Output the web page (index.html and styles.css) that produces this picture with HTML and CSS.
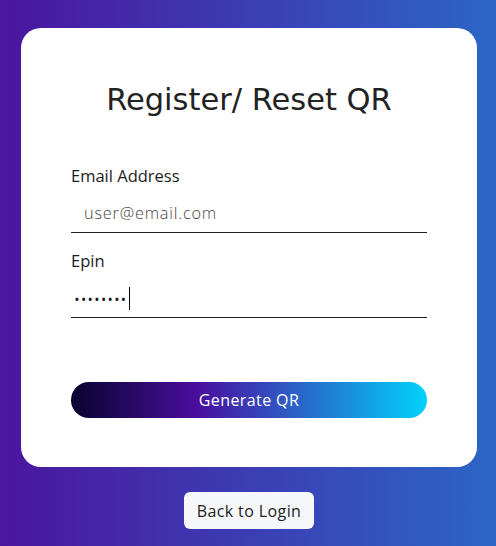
FILE: index.html
```html
<!DOCTYPE html>
<html>
<head>
<meta charset="utf-8">
<link rel="stylesheet" href="styles.css">
</head>
<body>
<div class="page">
  <div class="card">
    <h1 class="title">Register/ Reset QR</h1>
    <form class="form">
      <label class="field">
        <span class="label">Email Address</span>
        <span class="input">user@email.com</span>
      </label>
      <label class="field">
        <span class="label">Epin</span>
        <span class="input pw"><span class="dots">••••••••</span><span class="caret"></span></span>
      </label>
      <button type="button" class="btn-primary">Generate QR</button>
    </form>
  </div>
  <button type="button" class="btn-back">Back to Login</button>
</div>
</body>
</html>
```
FILE: styles.css
```css
* { box-sizing: border-box; }
html, body { margin: 0; padding: 0; }
body {
  width: 496px;
  height: 546px;
  overflow: hidden;
  background: linear-gradient(90deg, #4b159f 0%, #2c66c7 100%);
  font-family: "Open Sans", sans-serif;
  color: #222;
}
.page {
  display: flex;
  flex-direction: column;
  align-items: center;
  padding: 28px 19px 0 21px;
}
.card {
  width: 456px;
  height: 439px;
  background: #fff;
  border-radius: 20px;
  padding: 52px 50px 0 50px;
}
.title {
  margin: 0;
  text-align: center;
  font-family: "DejaVu Sans", sans-serif;
  font-weight: 400;
  font-size: 30.5px;
  line-height: 40px;
  color: #222;
}
.form {
  display: flex;
  flex-direction: column;
  margin-top: 45px;
}
.field { display: flex; flex-direction: column; }
.label {
  font-size: 16.5px;
  line-height: 22px;
  color: #1c1c1c;
  font-weight: 500;
}
.input {
  display: flex;
  align-items: flex-end;
  height: 46px;
  padding: 0 13px 8px 13px;
  border-bottom: 1px solid #222;
  font-size: 16.3px;
  line-height: 22px;
  font-weight: 300;
  letter-spacing: 0.8px;
  color: #444;
  margin-bottom: 17px;
}
.pw { color: #111; padding-left: 4px; padding-bottom: 7px; }
.dots { font-size: 10px; letter-spacing: 2.9px; font-weight: 700; line-height: 22px; }
.caret { width: 1px; height: 23px; background: #000; margin-left: 1px; }
.btn-primary {
  margin-top: 47px;
  height: 36px;
  border: none;
  border-radius: 18px;
  background: linear-gradient(90deg, #08042f 0%, #4a0e9d 35%, #2f58c3 60%, #00d2fc 100%);
  color: #fff;
  font-family: inherit;
  font-size: 16px;
  letter-spacing: 0.4px;
  font-weight: 400;
}
.btn-back {
  margin-top: 25px;
  height: 37px;
  padding: 0 13px;
  border: none;
  border-radius: 6px;
  background: #f5f7fa;
  color: #222;
  font-family: inherit;
  font-size: 16px;
  letter-spacing: 0.4px;
}
```
